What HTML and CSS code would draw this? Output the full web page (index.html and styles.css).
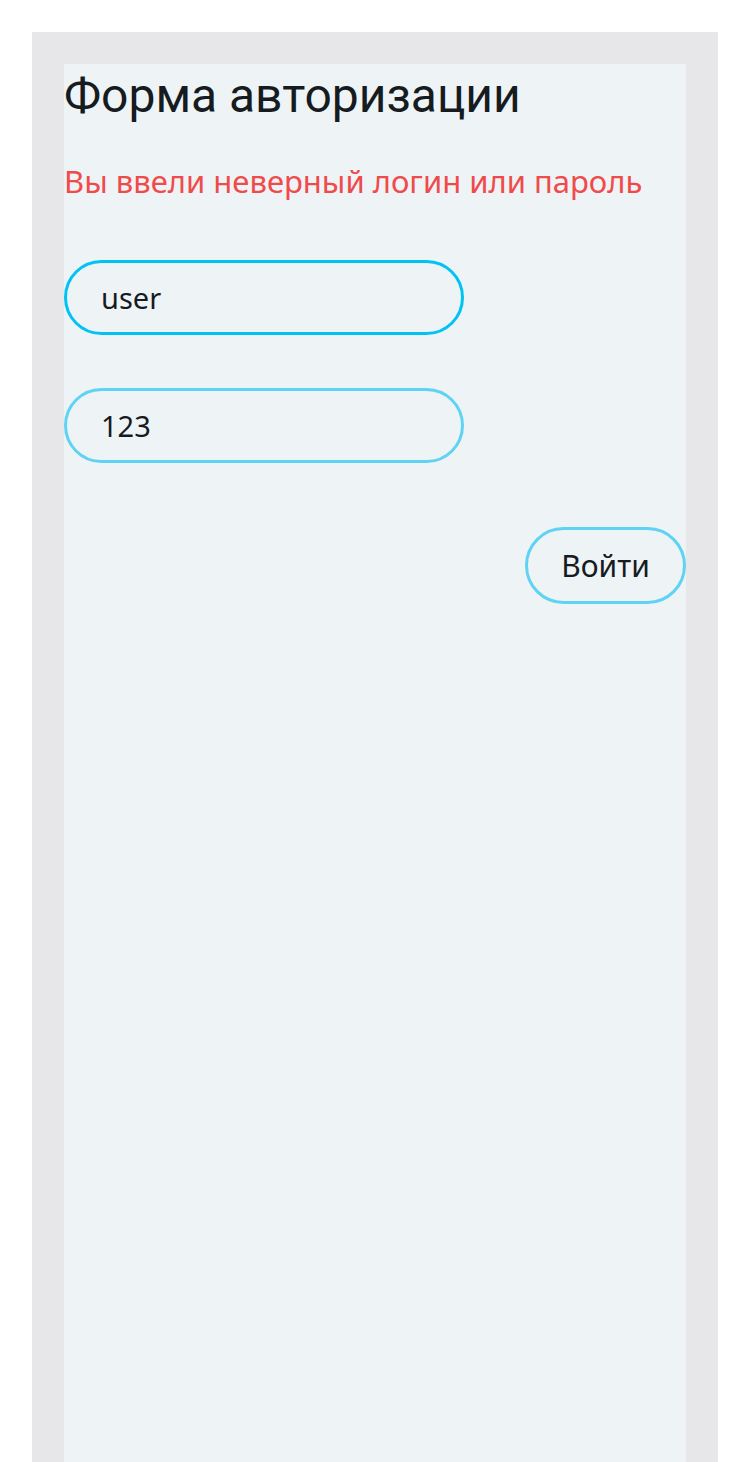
FILE: index.html
```html
<!DOCTYPE html>
<html lang="ru">
<head>
<meta charset="utf-8">
<title>Форма авторизации</title>
<link rel="stylesheet" href="styles.css">
</head>
<body>
<div class="outer">
  <form class="panel">
    <h1 class="title">Форма авторизации</h1>
    <p class="error">Вы ввели неверный логин или пароль</p>
    <input class="field field--focus" type="text" value="user">
    <input class="field" type="text" value="123">
    <div class="actions">
      <button class="btn" type="button">Войти</button>
    </div>
  </form>
</div>
</body>
</html>
```

FILE: styles.css
```css
html, body {
  margin: 0;
  padding: 0;
  background: #ffffff;
}
body {
  padding: 32px 32px 0 32px;
  font-family: "Noto Sans", "Open Sans", sans-serif;
  color: #161b1f;
}
.outer {
  background: #e7e7e9;
  padding: 32px 32px 0 32px;
  min-height: 1430px;
  box-sizing: border-box;
  display: flex;
  flex-direction: column;
}
.panel {
  background: #eef3f6;
  flex: 1;
  display: flex;
  flex-direction: column;
  align-items: flex-start;
}
.title {
  font-family: Roboto, sans-serif;
  font-weight: 400;
  font-size: 48px;
  line-height: 63px;
  margin: 0;
  color: #161b1f;
}
.error {
  margin: 33px 0 0 0;
  font-size: 31px;
  line-height: 42px;
  color: #f04b4b;
  white-space: nowrap;
}
.field {
  margin-top: 58px;
  width: 400px;
  height: 75px;
  box-sizing: border-box;
  border: 3px solid #5fd3f3;
  border-radius: 38px;
  background: transparent;
  padding: 0 34px;
  font-family: "Noto Sans", "Open Sans", sans-serif;
  font-size: 29px;
  color: #161b1f;
  outline: none;
}
.field + .field {
  margin-top: 53px;
}
.field--focus {
  border-color: #00c3f5;
}
.actions {
  align-self: stretch;
  display: flex;
  justify-content: flex-end;
  margin-top: 64px;
}
.btn {
  width: 161px;
  height: 77px;
  box-sizing: border-box;
  border: 3px solid #5fd3f3;
  border-radius: 39px;
  background: transparent;
  font-family: "Noto Sans", "Open Sans", sans-serif;
  font-size: 30px;
  color: #161b1f;
  padding: 0;
}
```
